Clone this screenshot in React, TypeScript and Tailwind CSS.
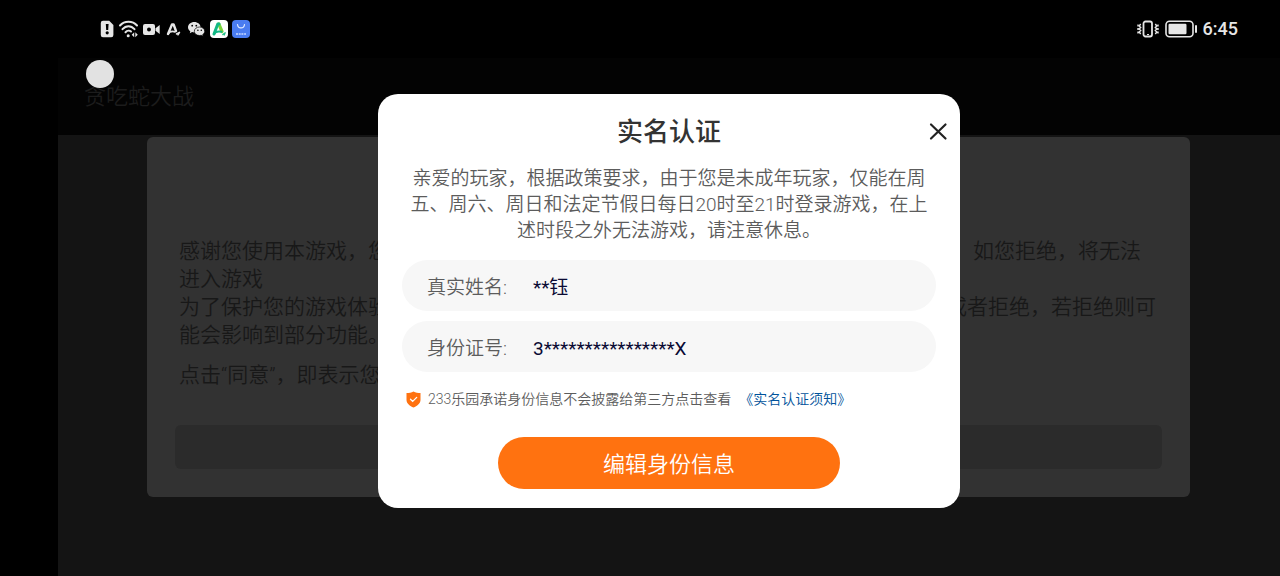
import React from "react";

function StatusIcons() {
  return (
    <div className="flex items-center gap-1">
      <svg width="14" height="18" viewBox="0 0 14 18" aria-hidden="true">
        <path d="M3 0.8h6.2L13.4 5v10a2.2 2.2 0 0 1-2.2 2.2H3A2.2 2.2 0 0 1 .8 15V3A2.2 2.2 0 0 1 3 .8z" fill="#e6e6e6" />
        <path d="M5.800 4h2.800l-.4 6H6.200z" fill="#000" />
        <circle cx="7.2" cy="12.8" r="1.6" fill="#000" />
      </svg>
      <svg width="20" height="18" viewBox="0 0 20 18" fill="none" stroke="#e6e6e6" strokeWidth="2" strokeLinecap="round" aria-hidden="true">
        <path d="M2 5.500C6.400.500 14.600.500 19 5.500" />
        <path d="M4.500 9.200C8 5.200 13 5.200 16.500 9.200" />
        <path d="M7.500 12.200C9.300 10.300 11.700 10.300 13 11.500" />
        <circle cx="10.200" cy="15.700" r="1.500" fill="#e6e6e6" stroke="none" />
        <path d="M16.200 12.200v5l-2.500-2.500zM17.300 12.200v5l2.500-2.500z" fill="#e6e6e6" stroke="none" />
      </svg>
      <svg width="18" height="18" viewBox="0 0 18 18" aria-hidden="true">
        <rect x="1" y="4" width="12" height="11" rx="2" fill="#e6e6e6" />
        <path d="M13.500 8.300L17.700 5v9l-4.200-3.300z" fill="#e6e6e6" />
        <circle cx="7" cy="9.500" r="2" fill="#000" />
      </svg>
      <svg width="18" height="18" viewBox="0 0 18 18" fill="none" stroke="#e6e6e6" strokeLinecap="round" strokeLinejoin="round" aria-hidden="true">
        <path d="M4 14L8 4.500h1.600L12 11" strokeWidth="2.400" />
        <path d="M4 14c1.500-2.500 4-3 7-2.200" strokeWidth="1.800" />
        <path d="M12.500 14l3-1.600-1.500 2.400" strokeWidth="1.500" />
      </svg>
      <svg width="20" height="18" viewBox="0 0 20 18" aria-hidden="true">
        <path d="M8.300 2C4.800 2 2 4.300 2 7.200c0 1.700.9 3.100 2.300 4.100L3.800 13.300l2.300-1.200c.7.2 1.400.3 2.200.3 3.500 0 6.300-2.300 6.300-5.200S11.800 2 8.300 2z" fill="#e6e6e6" />
        <path d="M13.500 7C10.600 7 8.300 8.900 8.300 11.300s2.300 4.200 5.200 4.200c.6 0 1.200-.1 1.700-.2l2 1-.5-1.700c1.200-.8 2-2 2-3.300C18.700 8.900 16.400 7 13.500 7z" fill="#e6e6e6" stroke="#000" strokeWidth=".7" />
        <circle cx="6.200" cy="5.700" r=".9" fill="#000" />
        <circle cx="10.300" cy="5.700" r=".9" fill="#000" />
        <circle cx="11.900" cy="10.200" r=".8" fill="#000" />
        <circle cx="15.300" cy="10.200" r=".8" fill="#000" />
      </svg>
      <svg width="18" height="18" viewBox="0 0 18 18" fill="none" strokeLinecap="round" strokeLinejoin="round" aria-hidden="true">
        <rect width="18" height="18" rx="4" fill="#fff" />
        <path d="M8.800 4L12 11.500" stroke="#7bd33c" strokeWidth="3.200" />
        <path d="M4 14L7.800 4H9" stroke="#12b886" strokeWidth="3" />
        <path d="M4 14c1.500-2.800 4-3 7.500-2.300" stroke="#12b886" strokeWidth="2" />
        <path d="M12.800 14.500l2.400-1.700-1 2.200" stroke="#22c08a" strokeWidth="1.300" />
      </svg>
      <svg width="18" height="18" viewBox="0 0 18 18" fill="none" aria-hidden="true">
        <rect width="18" height="18" rx="4" fill="#4a7cf0" />
        <path d="M5.500 4.500c.5 4.500 6.500 4.500 7 0" stroke="#e4edff" strokeWidth="1.200" strokeLinecap="round" />
        <path d="M4 14h10" stroke="#c9d9ff" strokeWidth="1.400" strokeDasharray="2 .7" />
      </svg>
    </div>
  );
}

function StatusBar() {
  return (
    <div className="flex h-[58px] items-center justify-between pr-[42px] pl-[100px]">
      <StatusIcons />
      <div className="flex items-center gap-[5px]">
        <svg width="24" height="18" viewBox="0 0 24 18" fill="none" stroke="#e6e6e6" aria-hidden="true">
          <rect x="7.500" y="1.500" width="8.500" height="15" rx="2" strokeWidth="1.800" />
          <path d="M11 14.500h2" strokeWidth="1" />
          <path d="M4.700 4L3.200 6l1.500 1.500L3.200 9l1.500 1.500L3.200 12l1.500 2M2 4.500v2M2 8v2M2 11.500v2M19.300 4l1.500 2-1.500 1.500L20.800 9l-1.500 1.500 1.500 1.500-1.500 2M22 4.500v2M22 8v2M22 11.500v2" strokeWidth="1.400" />
        </svg>
        <svg width="33" height="18" viewBox="0 0 33 18" aria-hidden="true">
          <rect x="1" y="1.200" width="27" height="15.600" rx="3.500" fill="none" stroke="#e6e6e6" strokeWidth="1.600" />
          <rect x="3.500" y="3.800" width="18" height="10.400" rx="1.200" fill="#e6e6e6" />
          <rect x="30" y="5" width="2" height="8" rx="1" fill="#e6e6e6" />
        </svg>
        <span className="font-[Roboto,sans-serif] text-[18px] leading-6 font-medium text-[#e6e6e6]">6:45</span>
      </div>
    </div>
  );
}

function ConsentCard() {
  return (
    <section className="mt-0.5 mr-[90px] ml-[89px] rounded-md bg-[#323232] px-7 pt-[100px] pb-7 text-[21px] leading-7 font-[350] text-[#181818]">
      <div className="pl-1">
        <div className="flex justify-between pr-[21px]">
          <span>感谢您使用本游戏，您</span>
          <span>如您拒绝，将无法</span>
        </div>
        <p>进入游戏</p>
        <div className="flex justify-between pr-1.5">
          <span>为了保护您的游戏体验</span>
          <span>或者拒绝，若拒绝则可</span>
        </div>
        <p>能会影响到部分功能。</p>
        <p className="mt-3">点击“同意”，即表示您</p>
      </div>
      <div className="mt-9 h-11 rounded-md bg-[#2b2b2b]" />
    </section>
  );
}

function Field({ id, label, value }: { id: string; label: string; value: string }) {
  return (
    <div className="flex h-[51px] items-center rounded-full bg-[#f7f7f7] px-[25px] pt-[5px] text-[19px]">
      <label htmlFor={id} className="w-[106px] shrink-0 font-[350] text-[#5c5c5c]">
        {label}
      </label>
      <input id={id} type="text" readOnly value={value} className="min-w-0 flex-1 bg-transparent text-[#0a0a33] outline-none" />
    </div>
  );
}

function VerifyDialog() {
  return (
    <div role="dialog" aria-labelledby="verify-title" className="w-[582px] rounded-[20px] bg-white px-6 pt-5 pb-[19px]">
      <div className="grid grid-cols-[1fr_auto_1fr] items-center">
        <h1 id="verify-title" className="col-start-2 text-[26px] leading-9 font-medium text-[#333]">
          实名认证
        </h1>
        <button type="button" aria-label="关闭" className="-mr-3 flex size-5 items-center justify-center justify-self-end">
          <svg width="20" height="20" viewBox="0 0 20 20" fill="none" stroke="#222" strokeWidth="2.200" strokeLinecap="round" aria-hidden="true">
            <path d="M3 2.500l14.500 14M17.500 2.500L3 16.500" />
          </svg>
        </button>
      </div>
      <p className="mt-4 text-center text-[19px] leading-[26px] font-[350] whitespace-nowrap text-[#5c5c5c]">
        亲爱的玩家，根据政策要求，由于您是未成年玩家，仅能在周
        <br />
        五、周六、周日和法定节假日每日20时至21时登录游戏，在上
        <br />
        述时段之外无法游戏，请注意休息。
      </p>
      <div className="mt-4 flex flex-col gap-2.5">
        <Field id="real-name" label="真实姓名:" value="**钰" />
        <Field id="id-number" label="身份证号:" value="3****************X" />
      </div>
      <div className="mt-4 flex items-center gap-[7px] pl-1 text-[14px] leading-[22px]">
        <svg width="15" height="17" viewBox="0 0 15 17" fill="none" aria-hidden="true">
          <path d="M7.500.5C9.500 1.600 12 2 14.500 2v7c0 3.500-3.500 6-7 7.500C4 15 .5 12.500.5 9V2c2.500 0 5-.4 7-1.500z" fill="#ff7210" />
          <path d="M4.500 8.200l2.200 2.200 4-4" stroke="#fff" strokeWidth="1.300" strokeLinecap="round" />
        </svg>
        <p className="font-[350] text-[#5c5c5c]">
          233乐园承诺身份信息不会披露给第三方点击查看
          <a href="#notice" className="ml-2 text-[#00529b]">《实名认证须知》</a>
        </p>
      </div>
      <button type="button" className="mx-auto mt-[27px] block h-[52px] w-[342px] rounded-full bg-[#ff7210] pt-0.5 text-[22px] font-[350] text-white">
        编辑身份信息
      </button>
    </div>
  );
}

export default function App() {
  return (
    <div className="relative flex min-h-screen flex-col bg-black font-[Roboto,'Noto_Sans_CJK_SC',sans-serif]">
      <StatusBar />
      <main className="ml-[58px] flex flex-1 flex-col bg-[#141414]">
        <header className="flex h-[77px] items-center bg-[#030303] pl-[26px] text-[22px] font-[350] text-[#1c1c1c]">贪吃蛇大战</header>
        <ConsentCard />
      </main>
      <div className="absolute top-[60px] left-[86px] size-7 rounded-full bg-[#e2e2e2]" />
      <div className="absolute inset-0 flex items-start justify-center pt-[94px] pl-[58px]">
        <VerifyDialog />
      </div>
    </div>
  );
}
